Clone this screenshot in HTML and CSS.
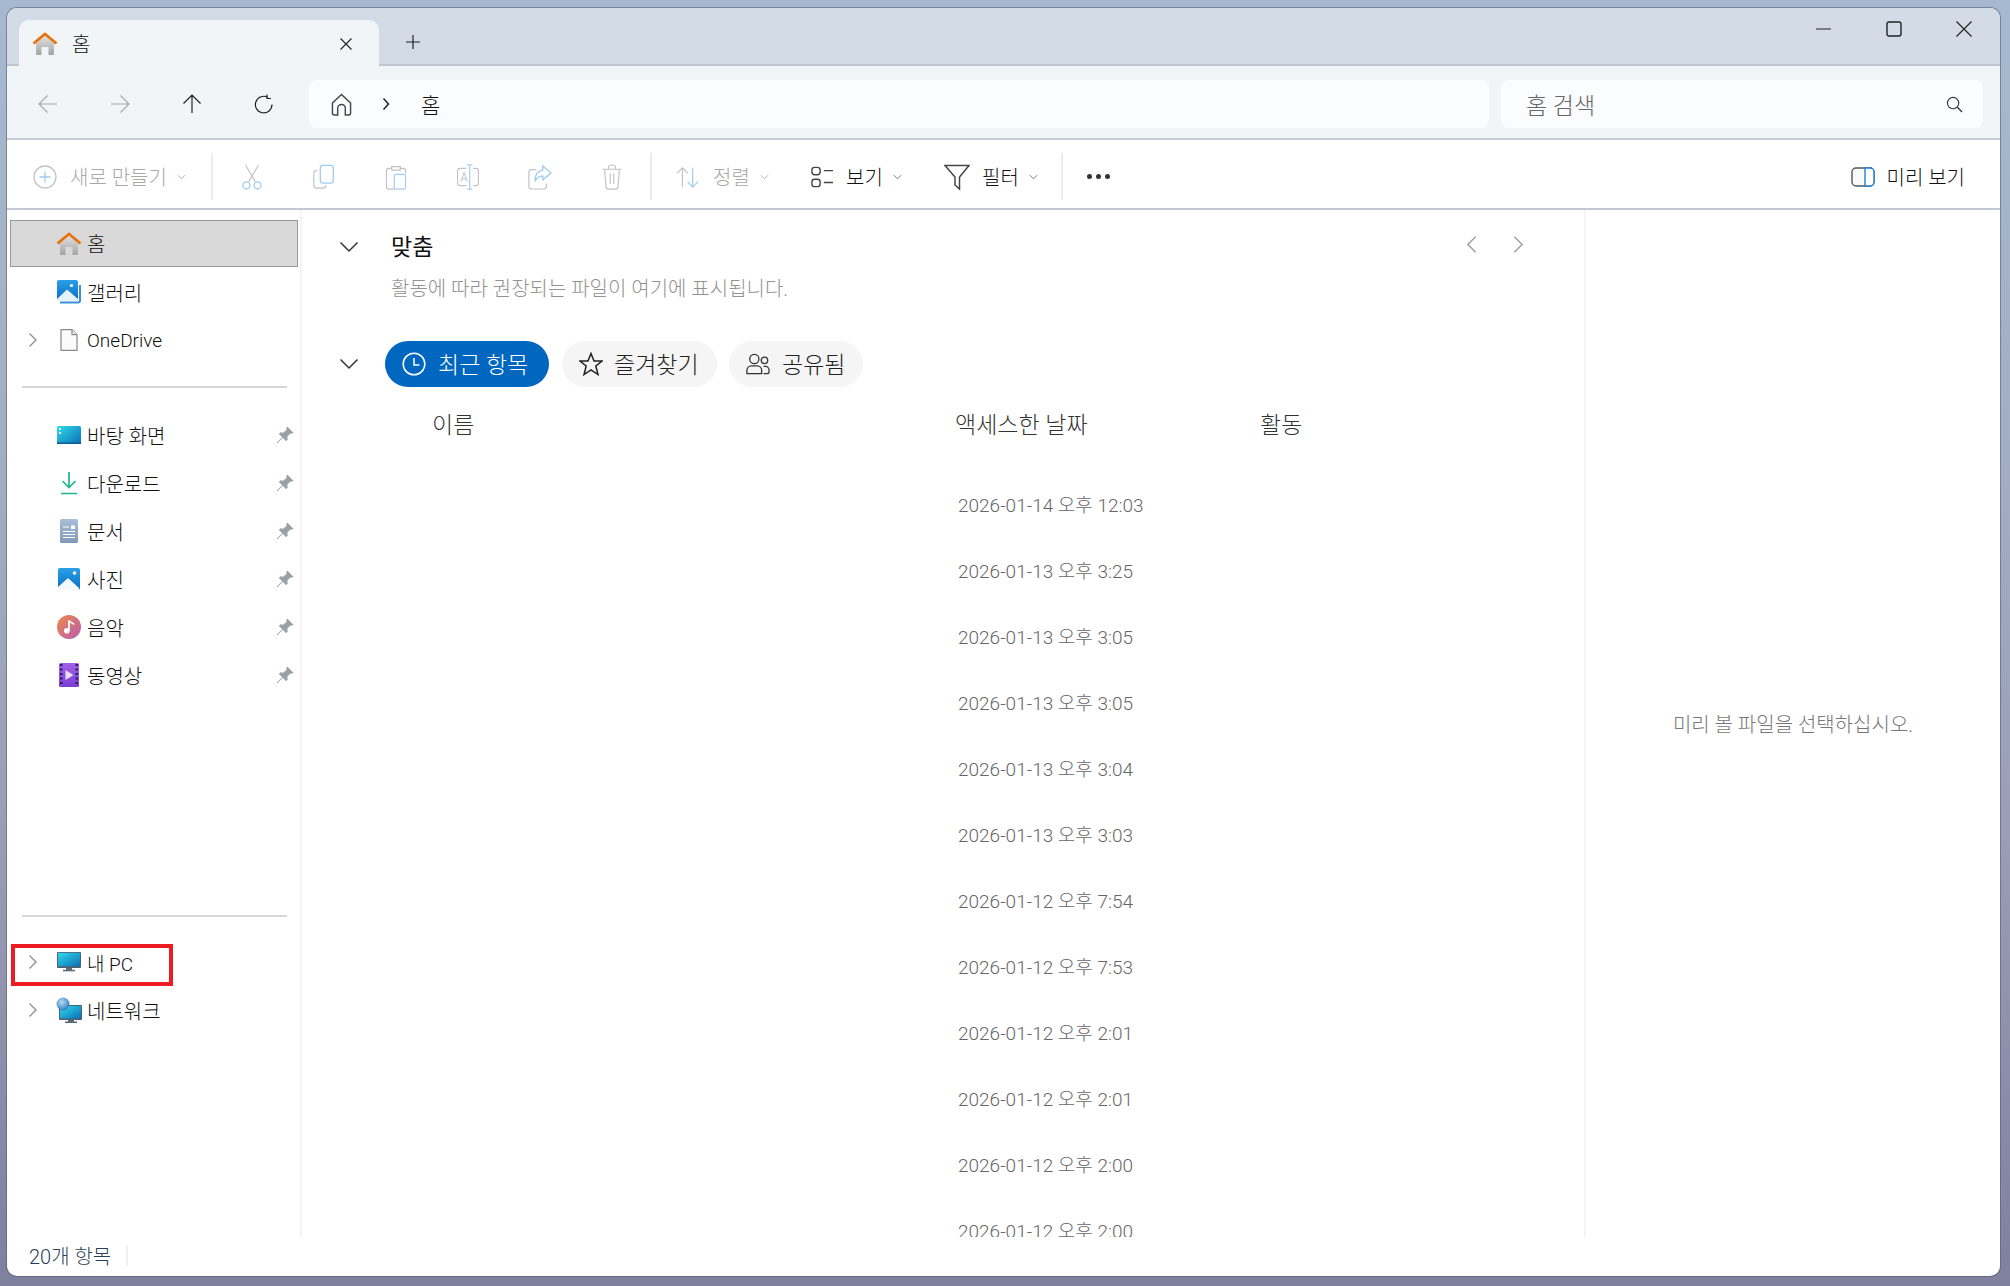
FILE: index.html
```html
<!DOCTYPE html>
<html lang="ko">
<head>
    <meta charset="UTF-8">
    <title>홈 - 파일 탐색기</title>
    <link rel="stylesheet" href="styles.css">
</head>
<body>
    <svg class="defs" aria-hidden="true">
        <defs>
            <linearGradient id="g-house" x1="0" y1="0" x2="0" y2="1"><stop offset="0" stop-color="#e2e2e2"/><stop offset="1" stop-color="#a3a3a3"/></linearGradient>
            <linearGradient id="g-blue" x1="0" y1="0" x2="0" y2="1"><stop offset="0" stop-color="#2aa0e6"/><stop offset="1" stop-color="#0a6cc4"/></linearGradient>
            <linearGradient id="g-desk" x1="0" y1="0" x2="1" y2="1"><stop offset="0" stop-color="#30dbe8"/><stop offset="1" stop-color="#0a6fb8"/></linearGradient>
            <linearGradient id="g-doc" x1="0" y1="0" x2="0" y2="1"><stop offset="0" stop-color="#a9bed6"/><stop offset="1" stop-color="#7f9ab8"/></linearGradient>
            <linearGradient id="g-music" x1="0" y1="0" x2="1" y2="1"><stop offset="0" stop-color="#f0894a"/><stop offset="1" stop-color="#b85cb0"/></linearGradient>
            <linearGradient id="g-video" x1="0" y1="0" x2="0" y2="1"><stop offset="0" stop-color="#a262e8"/><stop offset="1" stop-color="#7a3fd0"/></linearGradient>
            <radialGradient id="g-globe" cx="0.4" cy="0.35" r="0.7"><stop offset="0" stop-color="#b5dcf5"/><stop offset="1" stop-color="#2a78b8"/></radialGradient>
        </defs>
        <symbol id="i-house" viewBox="0 0 26 24">
            <path d="M4 11 13 3.500 22 11V22a1 1 0 0 1-1 1H16.500V15H9.500V23H5a1 1 0 0 1-1-1Z" fill="url(#g-house)"/>
            <path d="M1.500 11.500 13 2l11.500 9.500" fill="none" stroke="#e8710a" stroke-width="2.800"/>
        </symbol>
        <symbol id="i-gallery" viewBox="0 0 24 24">
            <path d="M3 22.500H21a2 2 0 0 0 2-2V5" fill="none" stroke="#3f8fd6" stroke-width="2"/>
            <rect x="0" y="0" width="21" height="21" rx="2" fill="url(#g-blue)"/>
            <path d="M0 19 10 9.500 21 19V21H0Z" fill="#e6f3fb"/>
            <circle cx="14.500" cy="5.500" r="1.600" fill="#fff"/>
        </symbol>
        <symbol id="i-photo" viewBox="0 0 22 22">
            <rect width="22" height="22" rx="2" fill="url(#g-blue)"/>
            <path d="M0 19 10 10 21 20V22H0Z" fill="#f3f9fd"/>
            <circle cx="16.500" cy="5" r="1.800" fill="#fff"/>
        </symbol>
        <symbol id="i-file" viewBox="0 0 18 22">
            <path d="M1 .7H12L17 5.700V21.300H1Z" fill="#fbfbfb" stroke="#8a8a8a" stroke-width="1.200"/>
            <path d="M12 .7V5.700H17" fill="#eee" stroke="#8a8a8a" stroke-width="1.200"/>
        </symbol>
        <symbol id="i-desktop" viewBox="0 0 24 18">
            <rect width="24" height="18" rx="1.500" fill="url(#g-desk)"/>
            <rect x="2" y="2" width="2" height="2" fill="#e8fbfd"/>
            <rect x="2" y="6" width="2" height="2" fill="#e8fbfd"/>
            <rect x="0" y="16.500" width="24" height="1.500" fill="#0b5f96"/>
        </symbol>
        <symbol id="i-download" viewBox="0 0 18 24">
            <path d="M9 1V16M2.500 10 9 16.500 15.500 10M1 22.500H17" fill="none" stroke="#1fb58f" stroke-width="1.700"/>
        </symbol>
        <symbol id="i-doc" viewBox="0 0 18 24">
            <rect width="18" height="24" rx="1.500" fill="url(#g-doc)"/>
            <path d="M3 8H9M3 12.500H15M3 15.500H15M3 18.500H15" stroke="#fff" stroke-width="1"/>
            <rect x="11" y="6.500" width="4" height="3.500" fill="#fff"/>
        </symbol>
        <symbol id="i-music" viewBox="0 0 24 24">
            <circle cx="12" cy="12" r="12" fill="url(#g-music)"/>
            <path d="M12 5.500V15.500" stroke="#fff" stroke-width="1.800"/>
            <path d="M12 5.500C13 8 16 7.500 17 9.500" fill="none" stroke="#fff" stroke-width="1.600"/>
            <circle cx="9.800" cy="15.800" r="2.800" fill="#fff"/>
        </symbol>
        <symbol id="i-video" viewBox="0 0 20 24">
            <rect width="20" height="24" rx="1.500" fill="url(#g-video)"/>
            <path d="M1 2H3.500M1 6.500H3.500M1 11H3.500M1 15.500H3.500M1 20H3.500M16.500 2H19M16.500 6.500H19M16.500 11H19M16.500 15.500H19M16.500 20H19" stroke="#2a1a6a" stroke-width="2"/>
            <path d="M6.500 7V17L14.500 12Z" fill="#e8ddfb"/>
        </symbol>
        <symbol id="i-pc" viewBox="0 0 24 20">
            <rect x="9" y="15" width="6" height="3" fill="#5a6b78"/>
            <rect x="6" y="17.800" width="12" height="1.500" fill="#5a6b78"/>
            <rect width="24" height="16" rx="1" fill="#4f5f6e"/>
            <rect x="1" y=".8" width="22" height="13.500" fill="url(#g-desk)"/>
        </symbol>
        <symbol id="i-network" viewBox="0 0 26 26">
            <rect x="3" y="8" width="23" height="15" rx="1" fill="#4f5f6e"/>
            <rect x="4" y="9" width="21" height="12.500" fill="url(#g-desk)"/>
            <rect x="12" y="23" width="6" height="2" fill="#5a6b78"/>
            <rect x="9" y="24.500" width="12" height="1.500" fill="#5a6b78"/>
            <circle cx="7" cy="7" r="6.500" fill="url(#g-globe)"/>
        </symbol>
        <symbol id="i-pin" viewBox="0 0 16 16">
            <path d="M10 .5 15.500 6 14 7 13 6.500 10 9.500 10.500 12 9 13.500 6 10.500 1.500 15 .8 15.200 1 14.500 5.500 10 2.500 7 4 5.500 6.500 6 9.500 3 9 2Z" fill="#98a2ab"/>
        </symbol>
        <symbol id="i-caret" viewBox="0 0 10 16">
            <path d="M1.500 1.500 8 8 1.500 14.500" fill="none" stroke="#8f8f8f" stroke-width="1.400"/>
        </symbol>
    </svg>

    <div class="window">
        <div class="titlebar">
            <div class="tab">
                <svg class="tab-house"><use href="#i-house"/></svg>
                <span class="tab-label">홈</span>
                <svg class="tab-close" viewBox="0 0 14 14"><path d="M1.500 1.500 12.500 12.500M12.500 1.500 1.500 12.500" stroke="#222" stroke-width="1.100"/></svg>
            </div>
            <svg class="tab-new" viewBox="0 0 16 16"><path d="M8 1V15M1 8H15" stroke="#222" stroke-width="1.200"/></svg>
            <div class="win-controls">
                <svg viewBox="0 0 16 16"><path d="M0 8H15" stroke="#222" stroke-width="1.200"/></svg>
                <svg viewBox="0 0 16 16"><rect x="1" y="1" width="14" height="14" rx="2" fill="none" stroke="#222" stroke-width="1.400"/></svg>
                <svg viewBox="0 0 16 16"><path d="M.5.500 15.500 15.500M15.500.500 .5 15.500" stroke="#222" stroke-width="1.200"/></svg>
            </div>
        </div>

        <div class="navbar">
            <div class="nav-btn"><svg viewBox="0 0 20 20"><path d="M19 10H1M9.500 1.500 1 10l8.500 8.500" fill="none" stroke="#a5a9ad" stroke-width="1.200"/></svg></div>
            <div class="nav-btn"><svg viewBox="0 0 20 20"><path d="M1 10H19M10.500 1.500 19 10l-8.500 8.500" fill="none" stroke="#a5a9ad" stroke-width="1.200"/></svg></div>
            <div class="nav-btn"><svg viewBox="0 0 20 20"><path d="M10 19V1M1.500 9.500 10 1l8.500 8.500" fill="none" stroke="#222" stroke-width="1.200"/></svg></div>
            <div class="nav-btn"><svg viewBox="0 0 20 20"><path d="M14 3.500A8.300 8.300 0 1 0 18 10.500M13 .5V4.500H17" fill="none" stroke="#222" stroke-width="1.200"/></svg></div>
            <div class="address">
                <svg class="addr-home" viewBox="0 0 22 24"><path d="M1.500 10.500 11 1.500l9.500 9V21a2 2 0 0 1-2 2H15V16a4 4 0 0 0-8 0V23H3.500a2 2 0 0 1-2-2Z" fill="none" stroke="#444" stroke-width="1.500"/></svg>
                <svg class="addr-sep" viewBox="0 0 8 14"><path d="M1.500 1.500 6.500 7 1.500 12.500" fill="none" stroke="#222" stroke-width="1.500"/></svg>
                <span class="addr-text">홈</span>
            </div>
            <div class="search">
                <span class="search-text">홈 검색</span>
                <svg class="search-icon" viewBox="0 0 18 18"><circle cx="7.500" cy="7.500" r="6" fill="none" stroke="#333" stroke-width="1.200"/><path d="M12 12 17 17" stroke="#333" stroke-width="1.400"/></svg>
            </div>
        </div>

        <div class="toolbar">
            <div class="tb-new disabled">
                <svg class="tb-icon" viewBox="0 0 24 24"><circle cx="12" cy="12" r="11" fill="none" stroke="#c4c4c4" stroke-width="1.300"/><path d="M12 6.500V17.500M6.500 12H17.500" stroke="#9fcdf2" stroke-width="1.300"/></svg>
                <span>새로 만들기</span>
                <svg class="chev" viewBox="0 0 10 6"><path d="M1 1 5 5 9 1" fill="none" stroke="#aaa" stroke-width="1"/></svg>
            </div>
            <div class="tb-sep sep-a"></div>
            <div class="tb-btn"><svg class="tb-icon" viewBox="0 0 24 28"><path d="M5 1 15.500 19M19 1 8.500 19" stroke="#c2c2c2" stroke-width="1.200"/><circle cx="6" cy="23" r="3.800" fill="none" stroke="#9fcdf2" stroke-width="1.400"/><circle cx="18" cy="23" r="3.800" fill="none" stroke="#9fcdf2" stroke-width="1.400"/></svg></div>
            <div class="tb-btn"><svg class="tb-icon" viewBox="0 0 24 28"><path d="M5 7H4a3 3 0 0 0-3 3V23a3 3 0 0 0 3 3H11a3 3 0 0 0 3-3" fill="none" stroke="#c2c2c2" stroke-width="1.300"/><rect x="8" y="1.500" width="14" height="19" rx="3" fill="none" stroke="#9fcdf2" stroke-width="1.400"/></svg></div>
            <div class="tb-btn"><svg class="tb-icon" viewBox="0 0 24 30"><path d="M7 5H4a3 3 0 0 0-3 3V26a3 3 0 0 0 3 3H10M17 5H20a3 3 0 0 1 3 3V11M7 3H17V7H7Z" fill="none" stroke="#c2c2c2" stroke-width="1.300"/><rect x="10" y="12" width="13" height="17" rx="2" fill="none" stroke="#9fcdf2" stroke-width="1.400"/></svg></div>
            <div class="tb-btn"><svg class="tb-icon" viewBox="0 0 26 30"><path d="M11 5H4a3 3 0 0 0-3 3V22a3 3 0 0 0 3 3H11M19 5H22a3 3 0 0 1 3 3V22a3 3 0 0 1-3 3H19" fill="none" stroke="#c2c2c2" stroke-width="1.300"/><path d="M15 1V29M12 1H18M12 29H18" stroke="#9fcdf2" stroke-width="1.300"/><path d="M5 20 8.500 10 12 20M6.200 17H10.800" fill="none" stroke="#c2c2c2" stroke-width="1.200"/></svg></div>
            <div class="tb-btn"><svg class="tb-icon" viewBox="0 0 26 28"><path d="M9 6H4a3 3 0 0 0-3 3V24a3 3 0 0 0 3 3H17a3 3 0 0 0 3-3V21" fill="none" stroke="#c2c2c2" stroke-width="1.300"/><path d="M16 2 25 9.500 16 17V13C12 13 9 15 7.500 19 7.500 12 10.500 7 16 6.500Z" fill="none" stroke="#9fcdf2" stroke-width="1.400"/></svg></div>
            <div class="tb-btn"><svg class="tb-icon" viewBox="0 0 24 30"><path d="M1 6H23M8 6V3.500A2 2 0 0 1 10 1.500H14A2 2 0 0 1 16 3.500V6M3.500 6 5 26a3 3 0 0 0 3 3H16a3 3 0 0 0 3-3L20.500 6M10 11V23M14 11V23" fill="none" stroke="#c2c2c2" stroke-width="1.300"/></svg></div>
            <div class="tb-sep sep-b"></div>
            <div class="tb-group tb-sort disabled">
                <svg class="tb-icon" viewBox="0 0 26 24"><path d="M7 23V2M1 8 7 2l6 6" fill="none" stroke="#c2c2c2" stroke-width="1.300"/><path d="M18 2V23M12.500 17 18 23l6-6" fill="none" stroke="#9fcdf2" stroke-width="1.300"/></svg>
                <span>정렬</span>
                <svg class="chev" viewBox="0 0 10 6"><path d="M1 1 5 5 9 1" fill="none" stroke="#aaa" stroke-width="1"/></svg>
            </div>
            <div class="tb-group tb-view">
                <svg class="tb-icon" viewBox="0 0 24 24"><rect x="1" y="1.500" width="9" height="8" rx="3" fill="none" stroke="#444" stroke-width="1.500"/><rect x="1" y="14.500" width="9" height="8" rx="3" fill="none" stroke="#444" stroke-width="1.500"/><path d="M14 5H24M14 18H24" stroke="#444" stroke-width="1.500"/></svg>
                <span>보기</span>
                <svg class="chev" viewBox="0 0 10 6"><path d="M1 1 5 5 9 1" fill="none" stroke="#666" stroke-width="1"/></svg>
            </div>
            <div class="tb-group tb-filter">
                <svg class="tb-icon" viewBox="0 0 26 26"><path d="M1 1.500H25L15.500 13V25L11 21V13Z" fill="none" stroke="#444" stroke-width="1.500"/></svg>
                <span>필터</span>
                <svg class="chev" viewBox="0 0 10 6"><path d="M1 1 5 5 9 1" fill="none" stroke="#666" stroke-width="1"/></svg>
            </div>
            <div class="tb-sep"></div>
            <div class="tb-more"><i></i><i></i><i></i></div>
            <div class="tb-preview">
                <svg viewBox="0 0 24 20"><rect x="1" y="1" width="22" height="18" rx="4" fill="#fafafa" stroke="#555" stroke-width="1.400"/><path d="M14 1H19a4 4 0 0 1 4 4V15a4 4 0 0 1-4 4H14Z" fill="#fff" stroke="#1a7fd8" stroke-width="1.400"/></svg>
                <span>미리 보기</span>
            </div>
        </div>

        <div class="content">
            <nav class="sidebar">
                <div class="side-group">
                    <div class="side-row selected"><span class="caret"></span><span class="side-icon"><svg class="ic-house"><use href="#i-house"/></svg></span><span>홈</span></div>
                    <div class="side-row"><span class="caret"></span><span class="side-icon"><svg class="ic-24"><use href="#i-gallery"/></svg></span><span>갤러리</span></div>
                    <div class="side-row"><svg class="caret"><use href="#i-caret"/></svg><span class="side-icon"><svg class="ic-file"><use href="#i-file"/></svg></span><span class="latin">OneDrive</span></div>
                </div>
                <div class="side-rule"></div>
                <div class="side-group pinned">
                    <div class="side-row"><span class="caret"></span><span class="side-icon"><svg class="ic-desktop"><use href="#i-desktop"/></svg></span><span>바탕 화면</span><svg class="pin"><use href="#i-pin"/></svg></div>
                    <div class="side-row"><span class="caret"></span><span class="side-icon"><svg class="ic-24"><use href="#i-download"/></svg></span><span>다운로드</span><svg class="pin"><use href="#i-pin"/></svg></div>
                    <div class="side-row"><span class="caret"></span><span class="side-icon"><svg class="ic-24"><use href="#i-doc"/></svg></span><span>문서</span><svg class="pin"><use href="#i-pin"/></svg></div>
                    <div class="side-row"><span class="caret"></span><span class="side-icon"><svg class="ic-22"><use href="#i-photo"/></svg></span><span>사진</span><svg class="pin"><use href="#i-pin"/></svg></div>
                    <div class="side-row"><span class="caret"></span><span class="side-icon"><svg class="ic-24"><use href="#i-music"/></svg></span><span>음악</span><svg class="pin"><use href="#i-pin"/></svg></div>
                    <div class="side-row"><span class="caret"></span><span class="side-icon"><svg class="ic-24"><use href="#i-video"/></svg></span><span>동영상</span><svg class="pin"><use href="#i-pin"/></svg></div>
                </div>
                <div class="side-bottom">
                    <div class="side-rule"></div>
                    <div class="side-group lower">
                        <div class="side-row marked"><svg class="caret"><use href="#i-caret"/></svg><span class="side-icon"><svg class="ic-pc"><use href="#i-pc"/></svg></span><span class="latin">내 PC</span><span class="red-box"></span></div>
                        <div class="side-row"><svg class="caret"><use href="#i-caret"/></svg><span class="side-icon"><svg class="ic-net"><use href="#i-network"/></svg></span><span>네트워크</span></div>
                    </div>
                </div>
            </nav>

            <main class="main">
                <div class="section-head">
                    <svg class="section-chev" viewBox="0 0 20 12"><path d="M1.500 1.500 10 10 18.500 1.500" fill="none" stroke="#333" stroke-width="1.500"/></svg>
                    <span class="section-title">맞춤</span>
                    <div class="pager">
                        <svg viewBox="0 0 12 20"><path d="M10.500 1.500 2 10l8.500 8.500" fill="none" stroke="#9a9a9a" stroke-width="1.400"/></svg>
                        <svg viewBox="0 0 12 20"><path d="M1.500 1.500 10 10l-8.500 8.500" fill="none" stroke="#9a9a9a" stroke-width="1.400"/></svg>
                    </div>
                </div>
                <p class="section-note">활동에 따라 권장되는 파일이 여기에 표시됩니다.</p>

                <div class="pill-row">
                    <svg class="section-chev" viewBox="0 0 20 12"><path d="M1.500 1.500 10 10 18.500 1.500" fill="none" stroke="#333" stroke-width="1.500"/></svg>
                    <div class="pill active">
                        <svg viewBox="0 0 24 24"><circle cx="12" cy="12" r="10.800" fill="none" stroke="#fff" stroke-width="1.500"/><path d="M12 6V13H17.500" fill="none" stroke="#fff" stroke-width="1.500"/></svg>
                        <span>최근 항목</span>
                    </div>
                    <div class="pill fav">
                        <svg viewBox="0 0 24 24"><path d="M12 1.500 15 9H23L16.800 14 19 22.500 12 17.800 5 22.500 7.200 14 1 9H9Z" fill="none" stroke="#222" stroke-width="1.500"/></svg>
                        <span>즐겨찾기</span>
                    </div>
                    <div class="pill shared">
                        <svg viewBox="0 0 26 24"><circle cx="9" cy="6.500" r="5" fill="none" stroke="#333" stroke-width="1.400"/><path d="M1 22.500V19a5 5 0 0 1 5-5H12a5 5 0 0 1 5 5V22.500Z" fill="none" stroke="#333" stroke-width="1.400"/><circle cx="20" cy="8" r="3.500" fill="none" stroke="#333" stroke-width="1.400"/><path d="M19 14.500H21a4 4 0 0 1 4 4V20a2.500 2.500 0 0 1-2.500 2.500H19" fill="none" stroke="#333" stroke-width="1.400"/></svg>
                        <span>공유됨</span>
                    </div>
                </div>

                <div class="file-grid file-head">
                    <span class="col-name">이름</span>
                    <span>액세스한 날짜</span>
                    <span>활동</span>
                </div>
                <div class="file-list">
                    <div class="file-grid file-row"><span></span><span>2026-01-14 오후 12:03</span></div>
                    <div class="file-grid file-row"><span></span><span>2026-01-13 오후 3:25</span></div>
                    <div class="file-grid file-row"><span></span><span>2026-01-13 오후 3:05</span></div>
                    <div class="file-grid file-row"><span></span><span>2026-01-13 오후 3:05</span></div>
                    <div class="file-grid file-row"><span></span><span>2026-01-13 오후 3:04</span></div>
                    <div class="file-grid file-row"><span></span><span>2026-01-13 오후 3:03</span></div>
                    <div class="file-grid file-row"><span></span><span>2026-01-12 오후 7:54</span></div>
                    <div class="file-grid file-row"><span></span><span>2026-01-12 오후 7:53</span></div>
                    <div class="file-grid file-row"><span></span><span>2026-01-12 오후 2:01</span></div>
                    <div class="file-grid file-row"><span></span><span>2026-01-12 오후 2:01</span></div>
                    <div class="file-grid file-row"><span></span><span>2026-01-12 오후 2:00</span></div>
                    <div class="file-grid file-row"><span></span><span>2026-01-12 오후 2:00</span></div>
                </div>
            </main>

            <aside class="preview-pane">미리 볼 파일을 선택하십시오.</aside>
        </div>

        <div class="statusbar">
            <span class="status-text">20개 항목</span>
            <span class="status-sep"></span>
        </div>
    </div>
</body>
</html>
```

FILE: styles.css
```css
* {
    box-sizing: border-box;
}
html, body {
    margin: 0;
    height: 100%;
}
body {
    font-family: Roboto, "Noto Sans CJK KR", sans-serif;
    font-size: 20px;
    font-weight: 300;
    color: #111;
    height: 1286px;
    padding: 8px 10px 10px 7px;
    overflow: hidden;
    background: linear-gradient(180deg, #a6b9cf 0%, #a2aec6 35%, #9a9db8 65%, #7f7f9e 100%);
}
.defs {
    position: absolute;
    width: 0;
    height: 0;
}
svg {
    display: block;
    flex: none;
}
.window {
    height: 100%;
    display: flex;
    flex-direction: column;
    background: #fff;
    border-radius: 10px;
    overflow: hidden;
    box-shadow: 0 0 0 1px rgba(80, 90, 105, 0.55);
}

/* title bar */
.titlebar {
    height: 58px;
    flex: none;
    display: flex;
    align-items: flex-end;
    padding-left: 12px;
    background: #d3dce6;
    border-bottom: 2px solid #bfc8d2;
}
.tab {
    width: 360px;
    height: 46px;
    margin-bottom: -2px;
    display: flex;
    align-items: center;
    padding: 1px 26px 0 13px;
    background: #f1f5f8;
    border-radius: 10px 10px 0 0;
}
.tab-house {
    width: 26px;
    height: 24px;
}
.tab-label {
    margin-left: 14px;
    font-size: 20px;
}
.tab-close {
    width: 14px;
    height: 14px;
    margin-left: auto;
}
.tab-new {
    width: 16px;
    height: 16px;
    margin: 0 0 14px 26px;
}
.win-controls {
    margin-left: auto;
    align-self: flex-start;
    display: flex;
    gap: 54px;
    padding: 13px 28px 0 0;
}
.win-controls svg {
    width: 16px;
    height: 16px;
}

/* nav bar */
.navbar {
    height: 74px;
    flex: none;
    display: flex;
    align-items: center;
    padding: 4px 17px 0 5px;
    background: #f1f5f8;
    border-bottom: 2px solid #c3cad3;
}
.nav-btn {
    width: 72px;
    display: flex;
    justify-content: center;
}
.nav-btn svg {
    width: 20px;
    height: 20px;
}
.address {
    width: 1180px;
    height: 48px;
    margin-left: 9px;
    display: flex;
    align-items: center;
    padding-left: 22px;
    background: #fbfcfe;
    border-radius: 8px;
}
.addr-home {
    width: 21px;
    height: 23px;
}
.addr-sep {
    width: 8px;
    height: 14px;
    margin-left: 30px;
}
.addr-text {
    margin-left: 31px;
    font-size: 21px;
}
.search {
    flex: 1;
    height: 48px;
    margin-left: 12px;
    display: flex;
    align-items: center;
    padding: 0 20px 0 25px;
    background: #fbfcfe;
    border-radius: 8px;
}
.search-text {
    font-size: 23px;
    color: #666;
}
.search-icon {
    width: 17px;
    height: 17px;
    margin-left: auto;
}

/* command bar */
.toolbar {
    height: 70px;
    flex: none;
    display: flex;
    align-items: center;
    padding: 5px 35px 0 26px;
    border-bottom: 2px solid #c3cad3;
    font-size: 20px;
}
.tb-new {
    display: flex;
    align-items: center;
    width: 178px;
}
.tb-new span {
    margin-left: 13px;
}
.disabled span {
    color: #a8a8a8;
}
.tb-icon {
    width: 24px;
    height: 26px;
}
.chev {
    width: 9px;
    height: 6px;
    margin-left: 10px;
}
.tb-sep {
    width: 2px;
    height: 47px;
    background: #ececec;
}
.sep-a {
    margin-right: 3px;
}
.sep-b {
    margin-left: 2px;
}
.tb-btn {
    width: 72px;
    display: flex;
    justify-content: center;
}
.tb-group {
    display: flex;
    align-items: center;
}
.tb-group span {
    margin-left: 12px;
}
.tb-sort {
    width: 131px;
    padding-left: 24px;
}
.tb-sort span {
    margin-left: 13px;
}
.tb-view {
    width: 151px;
    padding-left: 26px;
}
.tb-view .tb-icon {
    width: 26px;
    height: 22px;
}
.tb-view span {
    margin-left: 11px;
}
.tb-filter {
    width: 127px;
    padding-left: 10px;
}
.tb-filter .tb-icon {
    width: 26px;
    height: 28px;
}
.tb-more {
    display: flex;
    gap: 4px;
    margin-left: 24px;
}
.tb-more i {
    width: 5px;
    height: 5px;
    border-radius: 50%;
    background: #333;
}
.tb-preview {
    margin-left: auto;
    display: flex;
    align-items: center;
    gap: 12px;
}
.tb-preview svg {
    width: 24px;
    height: 20px;
}

/* middle area */
.content {
    flex: 1;
    min-height: 0;
    display: flex;
}
.sidebar {
    width: 295px;
    flex: none;
    display: flex;
    flex-direction: column;
    border-right: 2px solid #f4f4f4;
    padding-top: 10px;
}
.side-row {
    position: relative;
    height: 48px;
    display: flex;
    align-items: center;
    padding-left: 21px;
    padding-right: 6px;
}
.side-row.selected {
    height: 47px;
    margin: 0 2px 1px 3px;
    padding-left: 18px;
    background: #d9d9d9;
    border: 1px solid #999;
    padding-right: 4px;
}
.caret {
    width: 10px;
    height: 16px;
    flex: none;
}
.selected .caret {
    margin-left: -1px;
}
.side-icon {
    width: 26px;
    height: 26px;
    margin-left: 18px;
    margin-right: 5px;
    display: flex;
    align-items: center;
    justify-content: center;
}
.latin {
    font-size: 19px;
}
.ic-house { width: 26px; height: 24px; }
.ic-24 { width: 24px; height: 24px; }
.ic-22 { width: 22px; height: 22px; }
.ic-file { width: 18px; height: 22px; }
.ic-desktop { width: 24px; height: 18px; }
.ic-pc { width: 24px; height: 20px; }
.ic-net { width: 26px; height: 26px; }
.pin {
    width: 18px;
    height: 18px;
    margin-left: auto;
}
.side-rule {
    height: 2px;
    margin: 22px 13px 0 15px;
    background: #d6d6d6;
}
.pinned {
    margin-top: 23px;
}
.side-bottom {
    margin-top: auto;
    margin-bottom: 202px;
}
.lower {
    margin-top: 22px;
}
.lower .side-row {
    padding-bottom: 2px;
}
.side-bottom .side-rule {
    margin-top: 0;
}
.red-box {
    position: absolute;
    left: 4px;
    top: 5px;
    width: 162px;
    height: 42px;
    border: 4px solid #ed1c24;
}

/* home content */
.main {
    flex: 1;
    min-width: 0;
    overflow: hidden;
    padding-top: 20px;
    border-right: 2px solid #f4f4f4;
}
.section-head {
    height: 34px;
    display: flex;
    align-items: center;
}
.section-chev {
    width: 20px;
    height: 12px;
    margin-left: 37px;
    flex: none;
}
.section-title {
    margin-left: 32px;
    margin-top: -4px;
    font-size: 23px;
    font-weight: 400;
}
.pager {
    margin-left: auto;
    display: flex;
    gap: 36px;
    padding-right: 60px;
    margin-top: -6px;
}
.pager svg {
    width: 11px;
    height: 19px;
}
.section-note {
    margin: 0 0 0 89px;
    height: 50px;
    line-height: 50px;
    font-size: 20px;
    color: #929292;
}
.pill-row {
    margin-top: 27px;
    height: 46px;
    display: flex;
    align-items: center;
}
.pill-row .section-chev {
    margin-right: 26px;
}
.pill {
    height: 46px;
    display: flex;
    align-items: center;
    background: #f5f5f5;
    border-radius: 23px;
    font-size: 23px;
    color: #222;
}
.pill span {
    margin-top: -2px;
}
.pill svg {
    width: 24px;
    height: 24px;
}
.pill.active {
    width: 164px;
    padding-left: 17px;
    gap: 12px;
    background: #0067c0;
    color: #fff;
}
.pill.fav {
    width: 155px;
    margin-left: 13px;
    padding-left: 17px;
    gap: 11px;
}
.pill.shared {
    width: 134px;
    margin-left: 12px;
    padding-left: 17px;
    gap: 12px;
}
.file-grid {
    display: grid;
    grid-template-columns: 653px 305px 1fr;
}
.file-head {
    height: 74px;
    padding-bottom: 2px;
    align-items: center;
    font-size: 23px;
    color: #333;
}
.col-name {
    padding-left: 130px;
}
.file-list {
    margin-top: 9px;
}
.file-row {
    height: 66px;
    align-items: center;
    font-size: 19px;
    color: #666;
}
.file-row span:last-child {
    padding-left: 3px;
}
.preview-pane {
    width: 414px;
    flex: none;
    display: flex;
    align-items: center;
    justify-content: center;
    font-size: 20px;
    color: #777;
}

/* status bar */
.statusbar {
    height: 39px;
    flex: none;
    display: flex;
    align-items: center;
    padding: 0 0 2px 22px;
}
.status-text {
    width: 97px;
    font-size: 20px;
    color: #2b3f55;
}
.status-sep {
    width: 2px;
    height: 21px;
    background: #f0f0f0;
}
```
